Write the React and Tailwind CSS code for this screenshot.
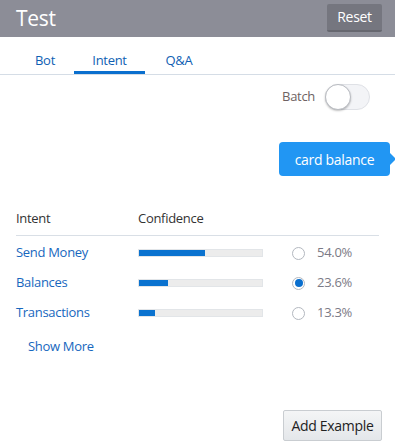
import { useState } from 'react';

const rows = [
  { name: 'Send Money', pct: 54.0 },
  { name: 'Balances', pct: 23.6 },
  { name: 'Transactions', pct: 13.3 },
];

const tabs = [
  { label: 'Bot', w: 'w-[58px]' },
  { label: 'Intent', w: 'w-[71px]' },
  { label: 'Q&A', w: 'w-[68px]' },
];

const App = () => {
  const [tab, setTab] = useState('Intent');
  const [selected, setSelected] = useState('Balances');
  const [batch, setBatch] = useState(false);

  return (
    <div className="w-[395px] h-[442px] bg-white flex flex-col overflow-hidden font-['Open_Sans',sans-serif] tracking-[-0.3px]">
      {/* Header */}
      <div className="h-[37px] bg-[#8c8d97] flex items-center justify-between pl-4 pr-[13px] shrink-0">
        <span className="text-white text-[21px] leading-none">Test</span>
        <button className="h-[28px] w-[55px] mt-[-1px] bg-[#75767f] rounded-[2px] border-b-2 border-[#66676f] text-white text-[14px] leading-none">
          Reset
        </button>
      </div>

      {/* Tabs */}
      <div className="h-[38px] border-b border-[#d5dde6] flex pl-4 shrink-0">
        {tabs.map((t) => (
          <button
            key={t.label}
            onClick={() => setTab(t.label)}
            className={`${t.w} pt-[11px] text-center text-[13px] leading-5 text-[#0f5fb3] border-b-[3px] ${
              tab === t.label ? 'border-[#0a6fce]' : 'border-transparent'
            }`}
          >
            {t.label}
          </button>
        ))}
      </div>

      {/* Batch toggle */}
      <div className="flex justify-end items-center gap-[10px] pr-[25px] mt-[9px]">
        <span className="text-[13px] text-[#6e6262]">Batch</span>
        <button
          onClick={() => setBatch(!batch)}
          className="relative w-[45px] h-[26px] rounded-full bg-[#f3f4f7] border border-[#dfe1e6]"
        >
          <span className="absolute left-[-1px] top-[-1px] w-[26px] h-[26px] rounded-full bg-white border border-[#b9bcc2] shadow-[0_1px_2px_rgba(0,0,0,0.25)]" />
        </button>
      </div>

      {/* Message bubble */}
      <div className="flex justify-end pr-[5px] mt-[32px]">
        <div className="relative h-[34px] w-[111px] bg-[#2196f3] rounded-[4px] flex items-center justify-center text-white text-[14px]">
          card balance
          <span className="absolute right-[-6px] top-[11px] w-0 h-0 border-y-[6px] border-y-transparent border-l-[6px] border-l-[#2196f3]" />
        </div>
      </div>

      {/* Table */}
      <div className="px-4 mt-[32px]">
        <div className="flex items-center h-[22px] border-b border-[#d9dfe6] pb-[5px] box-content text-[13px] text-[#333]">
          <span className="w-[122px]">Intent</span>
          <span>Confidence</span>
        </div>
        <div className="mt-[2px]">
          {rows.map((r) => (
            <div key={r.name} className="flex items-center h-[30px] text-[13px]">
              <span className="w-[122px] text-[#1767be]">{r.name}</span>
              <div className="w-[125px] h-[8px] bg-[#ececec] border border-[#e2e5e8] box-border">
                <div className="h-full bg-[#0a72cf]" style={{ width: `${r.pct}%` }} />
              </div>
              <button
                onClick={() => setSelected(r.name)}
                className="ml-[29px] w-[13px] h-[13px] rounded-full border border-[#b3b8bf] bg-white flex items-center justify-center"
              >
                {selected === r.name && <span className="w-[8px] h-[8px] rounded-full bg-[#0a6fce]" />}
              </button>
              <span className="ml-[12px] text-[#7b7a86]">{r.pct.toFixed(1)}%</span>
            </div>
          ))}
        </div>
        <div className="pl-3 mt-[9px] text-[13px] text-[#1767be]">Show More</div>
      </div>

      {/* Footer */}
      <div className="flex justify-end pr-[13px] mt-auto mb-[1px]">
        <button className="h-[31px] w-[99px] border border-[#c9cdd1] rounded-[2px] bg-gradient-to-b from-[#f4f5f6] to-[#e4e7ea] text-[14px] text-[#222]">
          Add Example
        </button>
      </div>
    </div>
  );
};

export default App;
